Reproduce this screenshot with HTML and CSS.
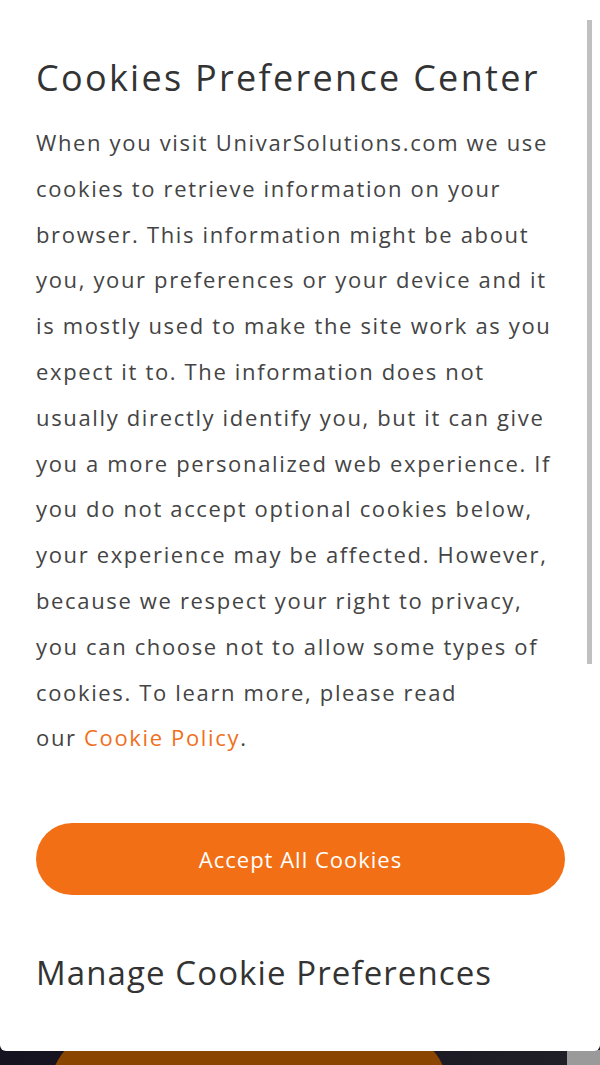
FILE: index.html
```html
<!DOCTYPE html>
<html>
<head>
<meta charset="utf-8">
<link rel="stylesheet" href="styles.css">
</head>
<body>
<div class="backdrop">
  <div class="orange-shape"></div>
  <div class="gray-block"></div>
</div>
<div class="panel">
  <div class="content">
    <h1 class="title">Cookies Preference Center</h1>
    <p class="desc">When you visit UnivarSolutions.com we use cookies to retrieve information on your browser. This information might be about you, your preferences or your device and it is mostly used to make the site work as you expect it to. The information does not usually directly identify you, but it can give you a more personalized web experience. If you do not accept optional cookies below, your experience may be affected. However, because we respect your right to privacy, you can choose not to allow some types of cookies. To learn more, please read <span class="nowrap">our <a class="link" href="#">Cookie Policy</a>.</span></p>
    <button class="accept">Accept All Cookies</button>
    <h2 class="manage">Manage Cookie Preferences</h2>
  </div>
  <div class="scroll-thumb"></div>
</div>
</body>
</html>
```
FILE: styles.css
```css
html, body {
  margin: 0;
  padding: 0;
}
body {
  width: 600px;
  height: 1065px;
  overflow: hidden;
  background: #17151f;
  position: relative;
  font-family: "Open Sans", "Noto Sans", sans-serif;
}
.backdrop {
  position: absolute;
  left: 0;
  top: 0;
  width: 600px;
  height: 1065px;
  background: linear-gradient(90deg, #15131f 0%, #1c1a24 70%, #211f27 100%);
}
.orange-shape {
  position: absolute;
  left: 50px;
  top: 1030px;
  width: 398px;
  height: 120px;
  border-radius: 60px 60px 0 0;
  background: #8a4500;
}
.gray-block {
  position: absolute;
  left: 567px;
  top: 1050px;
  width: 33px;
  height: 20px;
  background: #9a9a9a;
}
.panel {
  position: relative;
  background: #fff;
  height: 1051px;
  border-radius: 0 0 6px 6px;
  overflow: hidden;
}
.content {
  width: 529px;
  padding: 54px 0 0 36px;
  color: #444;
}
.title {
  margin: 0;
  font-size: 36px;
  font-weight: 400;
  letter-spacing: 2.3px;
  line-height: 48px;
  color: #333;
  white-space: nowrap;
}
.desc {
  margin: 18px 0 0 0;
  font-size: 22px;
  line-height: 45.8px;
  letter-spacing: 1.65px;
  color: #444;
}
.nowrap {
  white-space: nowrap;
}
.link {
  color: #f06f1c;
  text-decoration: none;
}
.accept {
  display: block;
  margin-top: 62px;
  width: 529px;
  height: 72px;
  border: none;
  border-radius: 36px;
  background: #f26f16;
  color: #fff;
  font-family: "Open Sans", "Noto Sans", sans-serif;
  font-size: 22px;
  letter-spacing: 1px;
  padding: 0;
}
.manage {
  margin: 56px 0 0 0;
  font-size: 33px;
  font-weight: 400;
  line-height: 44px;
  letter-spacing: 1.1px;
  color: #333;
  white-space: nowrap;
}
.scroll-thumb {
  position: absolute;
  left: 587px;
  top: 20px;
  width: 5px;
  height: 644px;
  background: #c0c0c0;
}
```
